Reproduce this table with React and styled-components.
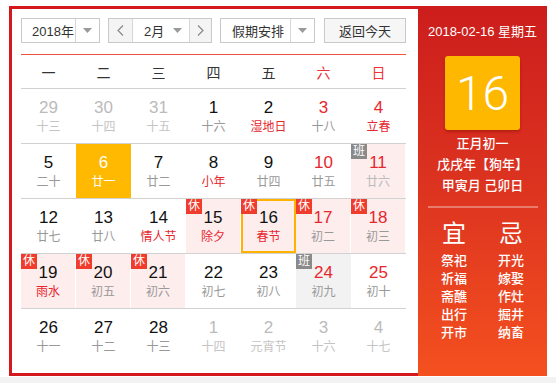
import styled, { createGlobalStyle } from "styled-components";

const GlobalStyle = createGlobalStyle`
  html, body {
    margin: 0;
    padding: 0;
    background: #fff;
  }
  body {
    font-family: "Liberation Sans", "Noto Sans CJK SC", sans-serif;
    color: #333;
  }
`;

const FONT = `"Liberation Sans", "Noto Sans CJK SC", sans-serif`;

const Page = styled.div`
  width: 556px;
  height: 383px;
  overflow: hidden;
  display: flex;
  flex-direction: column;
`;

const Calendar = styled.div`
  margin: 6px 0 0 9px;
  width: 538px;
  height: 370px;
  display: flex;
  box-sizing: border-box;
`;

const Footer = styled.div`
  flex: 1;
  margin-top: 1px;
  background: #f2f2f2;
`;

const MainPanel = styled.div`
  width: 409px;
  box-sizing: border-box;
  border: 3px solid #d4181c;
  border-right: none;
  padding: 9px 12px 0 9px;
  background: #fff;
`;

const Toolbar = styled.div`
  display: flex;
  align-items: center;
  height: 25px;
  gap: 8px;
  margin-bottom: 11px;
`;

const Box = styled.div`
  display: flex;
  height: 25px;
  box-sizing: border-box;
  border: 1px solid #c9c9c9;
  width: ${(p) => p.$w}px;
  background: #fff;
  font-size: 13px;
  color: #333;
`;

const Part = styled.div`
  display: flex;
  align-items: center;
  justify-content: ${(p) => p.$justify || "center"};
  padding-left: ${(p) => p.$pl || 0}px;
  padding-right: ${(p) => p.$pr || 0}px;
  width: ${(p) => (p.$w ? `${p.$w}px` : "auto")};
  flex: ${(p) => (p.$w ? "none" : 1)};
  background: ${(p) => (p.$gray ? "#f4f4f4" : "transparent")};
  border-left: ${(p) => (p.$divider ? "1px solid #d6d6d6" : "none")};
  box-sizing: border-box;
`;

const TodayButton = styled.div`
  width: 82px;
  height: 25px;
  box-sizing: border-box;
  border: 1px solid #c9c9c9;
  background: #f6f6f6;
  display: flex;
  align-items: center;
  justify-content: center;
  font-size: 13px;
  color: #333;
  margin-left: 1px;
`;

const Caret = () => (
  <svg width="9" height="5" viewBox="0 0 9 5">
    <path d="M0 0h9L4.5 5z" fill="#999" />
  </svg>
);

const Chevron = ({ dir }) => (
  <svg width="7" height="11" viewBox="0 0 7 11">
    <path
      d={dir === "left" ? "M6 0.5L1 5.5l5 5" : "M1 0.5l5 5-5 5"}
      fill="none"
      stroke="#888"
      strokeWidth="1.2"
    />
  </svg>
);

const RedLine = styled.div`
  height: 1px;
  background: #f2503f;
`;

const Grid = styled.div`
  display: grid;
  grid-template-columns: repeat(7, 55px);
`;

const HeadCell = styled.div`
  height: 33px;
  display: flex;
  align-items: center;
  justify-content: center;
  font-size: 14px;
  color: ${(p) => (p.$weekend ? "#ee3434" : "#333")};
  border-bottom: 1px solid #d2d2d2;
`;

const Row = styled.div`
  display: grid;
  grid-template-columns: repeat(7, 55px);
  border-top: ${(p) => (p.$first ? "none" : "1px solid #d2d2d2")};
`;

const cellBg = (p) => {
  if (p.$selected) return "#ffb900";
  if (p.$tone === "rest") return "#fdeded";
  if (p.$tone === "work") return "#f2f2f2";
  return "#fff";
};

const Cell = styled.div`
  position: relative;
  height: 54px;
  box-sizing: border-box;
  background: ${cellBg};
  border: ${(p) => (p.$today ? "2px solid #ffb300" : "none")};
  border-right: ${(p) =>
    p.$today ? "2px solid #ffb300" : p.$tone === "rest" ? "1px solid #fff" : "none"};
  display: flex;
  flex-direction: column;
  align-items: center;
  padding-top: ${(p) => (p.$today ? 7 : 9)}px;
`;

const dayColor = (p) => {
  if (p.$selected) return "#fff";
  if (p.$other) return "#bbb";
  if (p.$weekend) return "#e8262d";
  return "#111";
};

const DayNum = styled.div`
  font-family: ${FONT};
  font-size: 17px;
  line-height: 20px;
  color: ${dayColor};
`;

const lunarColor = (p) => {
  if (p.$selected) return "#fff";
  if (p.$other) return "#c4c4c4";
  if (p.$festival) return "#e8262d";
  if (p.$faint) return "#bbb";
  return "#999";
};

const Lunar = styled.div`
  font-size: 12px;
  line-height: 18px;
  color: ${lunarColor};
`;

const Badge = styled.span`
  position: absolute;
  top: ${(p) => (p.$inset ? -2 : 0)}px;
  left: ${(p) => (p.$inset ? -2 : 0)}px;
  width: 16px;
  height: 15px;
  font-size: 12px;
  line-height: 15px;
  text-align: center;
  color: #fff;
  background: ${(p) => (p.$work ? "#8a8a8a" : "#f03c2d")};
`;

const SidePanel = styled.div`
  flex: 1;
  background: linear-gradient(180deg, #cc1d1c 0%, #dd3420 50%, #f4501f 100%);
  color: #fff;
  display: flex;
  flex-direction: column;
  align-items: center;
  padding-top: 16px;
  box-sizing: border-box;
`;

const DateLine = styled.div`
  font-size: 13px;
  line-height: 20px;
`;

const BigDay = styled.div`
  margin-top: 14px;
  width: 75px;
  height: 74px;
  border-radius: 3px;
  background: #ffb800;
  box-shadow: 0 2px 3px rgba(120, 0, 0, 0.35);
  display: flex;
  align-items: center;
  justify-content: center;
  font-family: Roboto, ${FONT};
  font-weight: 300;
  font-size: 48px;
  color: #fff;
`;

const LunarInfo = styled.div`
  margin-top: 3px;
  display: flex;
  flex-direction: column;
  align-items: center;
  font-size: 13px;
  line-height: 21px;
  font-weight: 500;
`;

const Separator = styled.div`
  margin-top: 10px;
  width: 110px;
  height: 2px;
  background: rgba(255, 255, 255, 0.35);
`;

const Advice = styled.div`
  margin-top: 12px;
  display: grid;
  grid-template-columns: 50px 50px;
  column-gap: 7px;
`;

const AdviceColumn = styled.div`
  display: flex;
  flex-direction: column;
  align-items: center;
`;

const AdviceTitle = styled.div`
  font-size: 24px;
  line-height: 28px;
  margin-bottom: 4px;
`;

const AdviceItem = styled.div`
  font-size: 13px;
  line-height: 18px;
  font-weight: 500;
`;

const weekdays = ["一", "二", "三", "四", "五", "六", "日"];

// d: day, l: lunar, o: other month, f: festival, t: rest/work tone, b: badge
const weeks = [
  [
    { d: 29, l: "十三", o: true },
    { d: 30, l: "十四", o: true },
    { d: 31, l: "十五", o: true },
    { d: 1, l: "十六" },
    { d: 2, l: "湿地日", f: true },
    { d: 3, l: "十八" },
    { d: 4, l: "立春", f: true },
  ],
  [
    { d: 5, l: "二十" },
    { d: 6, l: "廿一", sel: true },
    { d: 7, l: "廿二" },
    { d: 8, l: "小年", f: true },
    { d: 9, l: "廿四" },
    { d: 10, l: "廿五" },
    { d: 11, l: "廿六", t: "rest", b: "班", faint: true },
  ],
  [
    { d: 12, l: "廿七" },
    { d: 13, l: "廿八" },
    { d: 14, l: "情人节", f: true },
    { d: 15, l: "除夕", f: true, t: "rest", b: "休" },
    { d: 16, l: "春节", f: true, t: "rest", b: "休", today: true },
    { d: 17, l: "初二", t: "rest", b: "休" },
    { d: 18, l: "初三", t: "rest", b: "休" },
  ],
  [
    { d: 19, l: "雨水", f: true, t: "rest", b: "休" },
    { d: 20, l: "初五", t: "rest", b: "休" },
    { d: 21, l: "初六", t: "rest", b: "休" },
    { d: 22, l: "初七" },
    { d: 23, l: "初八" },
    { d: 24, l: "初九", t: "work", b: "班" },
    { d: 25, l: "初十" },
  ],
  [
    { d: 26, l: "十一" },
    { d: 27, l: "十二" },
    { d: 28, l: "十三" },
    { d: 1, l: "十四", o: true },
    { d: 2, l: "元宵节", o: true },
    { d: 3, l: "十六", o: true },
    { d: 4, l: "十七", o: true },
  ],
];

const yi = ["祭祀", "祈福", "斋醮", "出行", "开市"];
const ji = ["开光", "嫁娶", "作灶", "掘井", "纳畜"];

const DayCell = ({ day, col }) => (
  <Cell $tone={day.t} $selected={day.sel} $today={day.today}>
    {day.b && (
      <Badge $work={day.b === "班"} $inset={day.today}>
        {day.b}
      </Badge>
    )}
    <DayNum $selected={day.sel} $other={day.o} $weekend={col >= 5}>
      {day.d}
    </DayNum>
    <Lunar $selected={day.sel} $other={day.o} $festival={day.f} $faint={day.faint}>
      {day.l}
    </Lunar>
  </Cell>
);

const App = () => {
  return (
    <Page>
      <GlobalStyle />
      <Calendar>
        <MainPanel>
          <Toolbar>
            <Box $w={79}>
              <Part $justify="flex-start" $pl={10}>2018年</Part>
              <Part $w={24} $divider>
                <Caret />
              </Part>
            </Box>
            <Box $w={104}>
              <Part $w={23} $gray>
                <Chevron dir="left" />
              </Part>
              <Part $divider $justify="space-between" $pl={11} $pr={7}>
                <span>2月</span>
                <Caret />
              </Part>
              <Part $w={22} $gray $divider>
                <Chevron dir="right" />
              </Part>
            </Box>
            <Box $w={95}>
              <Part $justify="flex-start" $pl={11}>假期安排</Part>
              <Part $w={24} $divider>
                <Caret />
              </Part>
            </Box>
            <TodayButton>返回今天</TodayButton>
          </Toolbar>
          <RedLine />
          <Grid>
            {weekdays.map((w, i) => (
              <HeadCell key={w} $weekend={i >= 5}>
                {w}
              </HeadCell>
            ))}
          </Grid>
          {weeks.map((week, r) => (
            <Row key={r} $first={r === 0}>
              {week.map((day, c) => (
                <DayCell key={c} day={day} col={c} />
              ))}
            </Row>
          ))}
        </MainPanel>
        <SidePanel>
          <DateLine>2018-02-16 星期五</DateLine>
          <BigDay>16</BigDay>
          <LunarInfo>
            <span>正月初一</span>
            <span>戊戌年【狗年】</span>
            <span>甲寅月 己卯日</span>
          </LunarInfo>
          <Separator />
          <Advice>
            <AdviceColumn>
              <AdviceTitle>宜</AdviceTitle>
              {yi.map((t) => (
                <AdviceItem key={t}>{t}</AdviceItem>
              ))}
            </AdviceColumn>
            <AdviceColumn>
              <AdviceTitle>忌</AdviceTitle>
              {ji.map((t) => (
                <AdviceItem key={t}>{t}</AdviceItem>
              ))}
            </AdviceColumn>
          </Advice>
        </SidePanel>
      </Calendar>
      <Footer />
    </Page>
  );
};

export default App;
